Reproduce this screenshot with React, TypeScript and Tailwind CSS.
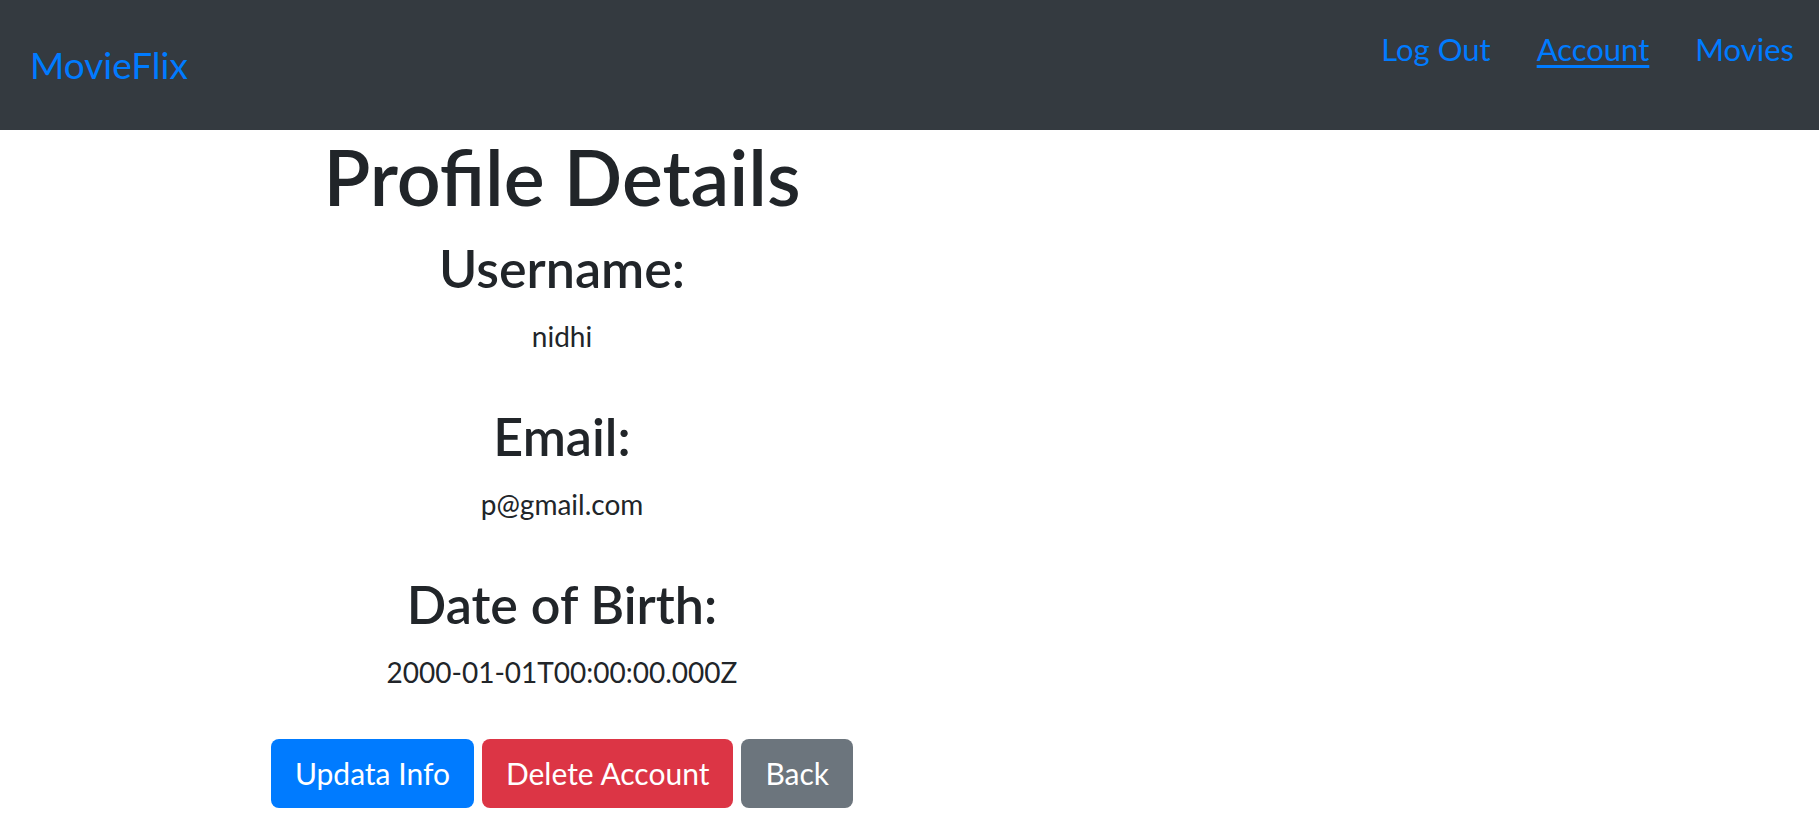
import React from "react";

const fields = [
  { label: "Username:", value: "nidhi" },
  { label: "Email:", value: "p@gmail.com" },
  { label: "Date of Birth:", value: "2000-01-01T00:00:00.000Z" },
];

export default function App() {
  return (
    <div
      className="min-h-screen bg-white text-[#212529]"
      style={{ fontFamily: "Lato, 'Open Sans', sans-serif" }}
    >
      <nav className="flex h-[130px] items-center justify-between bg-[#343a40] pl-[30px] pr-[25px]">
        <a href="#" className="text-[37px] leading-[1.5] text-[#007bff]">
          MovieFlix
        </a>
        <div className="flex gap-[46px] self-start pt-[26px] text-[31px] leading-[1.5] text-[#007bff]">
          <a href="#">Log Out</a>
          <a href="#" className="underline decoration-[3px] underline-offset-[4px]">
            Account
          </a>
          <a href="#">Movies</a>
        </div>
      </nav>

      <main className="flex w-[1124px] flex-col items-center text-center">
        <h1 className="mb-[15px] text-[77px] font-semibold leading-[92px]">Profile Details</h1>
        {fields.map((f, i) => (
          <section key={f.label} className={i < fields.length - 1 ? "mb-[48px]" : ""}>
            <h3 className="mb-[16px] text-[52px] font-semibold leading-[62px]">{f.label}</h3>
            <p className="text-[28px] leading-[42px]">{f.value}</p>
          </section>
        ))}
        <div className="mt-[46px] flex gap-[8px]">
          <button className="h-[69px] rounded-[8px] bg-[#007bff] px-[24px] text-[30px] text-white">
            Updata Info
          </button>
          <button className="h-[69px] rounded-[8px] bg-[#dc3545] px-[24px] text-[30px] text-white">
            Delete Account
          </button>
          <button className="h-[69px] rounded-[8px] bg-[#6c757d] px-[24px] text-[30px] text-white">
            Back
          </button>
        </div>
      </main>
    </div>
  );
}
